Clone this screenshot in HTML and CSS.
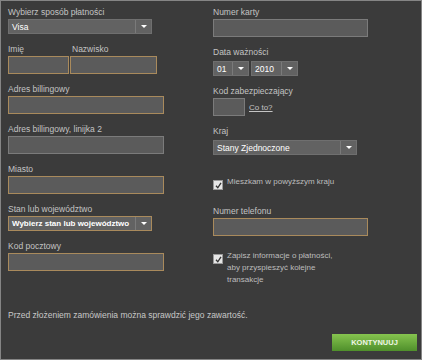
FILE: index.html
```html
<!DOCTYPE html>
<html lang="pl">
<head>
  <meta charset="UTF-8">
  <link rel="stylesheet" href="styles.css">
  <title>Płatność</title>
</head>
<body>

<div class="window">
  <div class="form">
    <div class="col col-left">
      <div class="field">
        <label>Wybierz sposób płatności</label>
        <div class="select w-144"><span class="value">Visa</span><span class="arrow"></span></div>
      </div>
      <div class="field-row">
        <div class="field">
          <label>Imię</label>
          <input type="text" class="text hl w-61">
        </div>
        <div class="field">
          <label class="shift">Nazwisko</label>
          <input type="text" class="text hl w-87">
        </div>
      </div>
      <div class="field">
        <label>Adres billingowy</label>
        <input type="text" class="text hl w-156">
      </div>
      <div class="field">
        <label>Adres billingowy, linijka 2</label>
        <input type="text" class="text w-156">
      </div>
      <div class="field">
        <label>Miasto</label>
        <input type="text" class="text hl w-156">
      </div>
      <div class="field">
        <label>Stan lub województwo</label>
        <div class="select hl w-144 bold"><span class="value">Wybierz stan lub województwo</span><span class="arrow"></span></div>
      </div>
      <div class="field">
        <label>Kod pocztowy</label>
        <input type="text" class="text hl w-156">
      </div>
    </div>

    <div class="col col-right">
      <div class="field">
        <label>Numer karty</label>
        <input type="text" class="text w-155">
      </div>
      <div class="field">
        <label>Data ważności</label>
        <div class="select-row">
          <div class="select w-36"><span class="value">01</span><span class="arrow"></span></div>
          <div class="select w-47"><span class="value">2010</span><span class="arrow"></span></div>
        </div>
      </div>
      <div class="field">
        <label>Kod zabezpieczający</label>
        <div class="cvv-row">
          <input type="text" class="text w-32">
          <a href="#" class="help">Co to?</a>
        </div>
      </div>
      <div class="field">
        <label>Kraj</label>
        <div class="select w-144 country"><span class="value">Stany Zjednoczone</span><span class="arrow"></span></div>
      </div>
      <div class="check-row first">
        <span class="checkbox">
          <svg width="7" height="7" viewBox="0 0 7 7"><path d="M1 3.8 L2.8 5.8 L6 0.8" fill="none" stroke="#333" stroke-width="1.3"/></svg>
        </span>
        <span class="check-text">Mieszkam w powyższym kraju</span>
      </div>
      <div class="field">
        <label>Numer telefonu</label>
        <input type="text" class="text hl w-155">
      </div>
      <div class="check-row second">
        <span class="checkbox">
          <svg width="7" height="7" viewBox="0 0 7 7"><path d="M1 3.8 L2.8 5.8 L6 0.8" fill="none" stroke="#333" stroke-width="1.3"/></svg>
        </span>
        <span class="check-text">Zapisz informacje o płatności,<br>aby przyspieszyć kolejne<br>transakcje</span>
      </div>
    </div>
  </div>

  <p class="note">Przed złożeniem zamówienia można sprawdzić jego zawartość.</p>

  <button class="continue">KONTYNUUJ</button>
</div>

</body>
</html>
```

FILE: styles.css
```css
body {
  margin: 0;
  background-color: #fff;
  font-family: 'Liberation Sans', Arial, sans-serif;
}

.window {
  box-sizing: border-box;
  width: 422px;
  height: 360px;
  border: 1px solid #858585;
  background-color: #3b3b3b;
  padding: 5px 4px 0 7px;
  display: flex;
  flex-direction: column;
}

.form {
  display: flex;
  align-items: flex-start;
}

.col-left {
  width: 205px;
}

.col-right {
  flex: 1;
}

.field {
  margin-bottom: 9px;
}

.field-row {
  display: flex;
  gap: 1px;
}

label {
  display: block;
  font-size: 8.5px;
  line-height: 12px;
  color: #c4c4c4;
  margin-bottom: 1px;
}

label.shift {
  padding-left: 2px;
}

.text {
  display: block;
  box-sizing: border-box;
  height: 18px;
  margin: 0;
  padding: 0 3px;
  background-color: #5b5b5b;
  border: 1px solid #7b7b7b;
  color: #fff;
  outline: none;
}

.text.hl, .select.hl {
  border-color: #a98a5c;
}

.w-32 { width: 32px; }
.w-36 { width: 36px; }
.w-47 { width: 47px; }
.w-61 { width: 61px; }
.w-87 { width: 87px; }
.w-144 { width: 144px; }
.w-155 { width: 155px; }
.w-156 { width: 156px; }

.select {
  box-sizing: border-box;
  height: 15px;
  margin-top: 1px;
  display: flex;
  align-items: center;
  background-color: #626262;
  border: 1px solid #6f6f6f;
  color: #fff;
  font-size: 8.5px;
}

.select.bold {
  font-weight: bold;
  font-size: 8px;
}

.select.country {
  margin-top: 3px;
}

.select .value {
  flex: 1;
  padding-left: 3px;
  white-space: nowrap;
  overflow: hidden;
}

.select .arrow {
  flex: none;
  width: 15px;
  height: 100%;
  border-left: 1px solid #7a7a7a;
  position: relative;
}

.select .arrow::after {
  content: '';
  position: absolute;
  left: 5px;
  top: 5px;
  border-left: 3px solid transparent;
  border-right: 3px solid transparent;
  border-top: 3px solid #fff;
}

.select-row {
  display: flex;
  gap: 2px;
  padding-top: 1px;
}

.cvv-row {
  display: flex;
  align-items: center;
  gap: 4px;
}

.help {
  font-size: 8px;
  color: #c4c4c4;
  text-decoration: underline;
}

.check-row {
  display: flex;
  align-items: flex-start;
  gap: 4px;
}

.check-row.first {
  margin-top: 21px;
  margin-bottom: 15px;
}

.check-row.second {
  margin-top: 14px;
}

.checkbox {
  flex: none;
  box-sizing: border-box;
  width: 10px;
  height: 10px;
  margin-top: 4px;
  background-color: #e6e6e6;
  border: 1px solid #9a9a9a;
  display: flex;
  align-items: center;
  justify-content: center;
}

.check-text {
  font-size: 8px;
  line-height: 12px;
  color: #bdbdbd;
}

.note {
  margin: 23px 0 0 0;
  font-size: 8.5px;
  line-height: 12px;
  color: #c8c8c8;
}

.continue {
  align-self: flex-end;
  margin-top: 13px;
  width: 85px;
  height: 17px;
  padding: 0;
  border: none;
  background: linear-gradient(#86c44f, #4f8f2b);
  color: #eef6e6;
  font-family: 'Liberation Sans', Arial, sans-serif;
  font-size: 7.5px;
  font-weight: bold;
  cursor: pointer;
}
```
